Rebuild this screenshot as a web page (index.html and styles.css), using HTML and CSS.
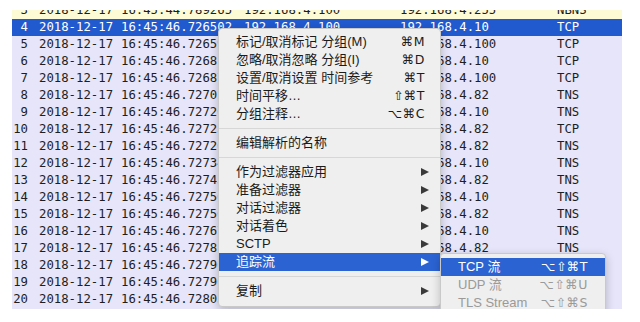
FILE: index.html
```html
<!DOCTYPE html>
<html>
<head>
<meta charset="utf-8">
<link rel="stylesheet" href="styles.css">
</head>
<body>
<div class="frame">
  <div class="packets">
    <div class="row nbns"><span class="no">3</span><span>2018-12-17</span><span>16:45:44.789265</span><span>192.168.4.100</span><span>192.168.4.255</span><span>NBNS</span></div>
    <div class="row sel"><span class="no">4</span><span>2018-12-17</span><span>16:45:46.726502</span><span>192.168.4.100</span><span>192.168.4.10</span><span>TCP</span></div>
    <div class="row"><span class="no">5</span><span>2018-12-17</span><span>16:45:46.726598</span><span>192.168.4.10</span><span>192.168.4.100</span><span>TCP</span></div>
    <div class="row"><span class="no">6</span><span>2018-12-17</span><span>16:45:46.726814</span><span>192.168.4.100</span><span>192.168.4.10</span><span>TCP</span></div>
    <div class="row"><span class="no">7</span><span>2018-12-17</span><span>16:45:46.726870</span><span>192.168.4.10</span><span>192.168.4.100</span><span>TCP</span></div>
    <div class="row"><span class="no">8</span><span>2018-12-17</span><span>16:45:46.727012</span><span>192.168.4.10</span><span>192.168.4.82</span><span>TNS</span></div>
    <div class="row"><span class="no">9</span><span>2018-12-17</span><span>16:45:46.727206</span><span>192.168.4.82</span><span>192.168.4.10</span><span>TNS</span></div>
    <div class="row"><span class="no">10</span><span>2018-12-17</span><span>16:45:46.727231</span><span>192.168.4.10</span><span>192.168.4.82</span><span>TCP</span></div>
    <div class="row"><span class="no">11</span><span>2018-12-17</span><span>16:45:46.727265</span><span>192.168.4.10</span><span>192.168.4.82</span><span>TNS</span></div>
    <div class="row"><span class="no">12</span><span>2018-12-17</span><span>16:45:46.727348</span><span>192.168.4.82</span><span>192.168.4.10</span><span>TNS</span></div>
    <div class="row"><span class="no">13</span><span>2018-12-17</span><span>16:45:46.727433</span><span>192.168.4.10</span><span>192.168.4.82</span><span>TNS</span></div>
    <div class="row"><span class="no">14</span><span>2018-12-17</span><span>16:45:46.727502</span><span>192.168.4.82</span><span>192.168.4.10</span><span>TNS</span></div>
    <div class="row"><span class="no">15</span><span>2018-12-17</span><span>16:45:46.727561</span><span>192.168.4.10</span><span>192.168.4.82</span><span>TNS</span></div>
    <div class="row"><span class="no">16</span><span>2018-12-17</span><span>16:45:46.727677</span><span>192.168.4.82</span><span>192.168.4.10</span><span>TNS</span></div>
    <div class="row"><span class="no">17</span><span>2018-12-17</span><span>16:45:46.727810</span><span>192.168.4.10</span><span>192.168.4.82</span><span>TNS</span></div>
    <div class="row"><span class="no">18</span><span>2018-12-17</span><span>16:45:46.727904</span><span>192.168.4.82</span><span>192.168.4.10</span><span>TNS</span></div>
    <div class="row"><span class="no">19</span><span>2018-12-17</span><span>16:45:46.727966</span><span>192.168.4.10</span><span>192.168.4.82</span><span>TNS</span></div>
    <div class="row"><span class="no">20</span><span>2018-12-17</span><span>16:45:46.728037</span><span>192.168.4.82</span><span>192.168.4.10</span><span>TNS</span></div>
  </div>

  <div class="menu main">
    <div class="item"><span>标记/取消标记 分组(M)</span><span class="key">⌘M</span></div>
    <div class="item"><span>忽略/取消忽略 分组(I)</span><span class="key">⌘D</span></div>
    <div class="item"><span>设置/取消设置 时间参考</span><span class="key">⌘T</span></div>
    <div class="item"><span>时间平移…</span><span class="key">⇧⌘T</span></div>
    <div class="item"><span>分组注释…</span><span class="key">⌥⌘C</span></div>
    <div class="sep"></div>
    <div class="item"><span>编辑解析的名称</span></div>
    <div class="sep"></div>
    <div class="item sub"><span>作为过滤器应用</span><span class="arrow"></span></div>
    <div class="item sub"><span>准备过滤器</span><span class="arrow"></span></div>
    <div class="item sub"><span>对话过滤器</span><span class="arrow"></span></div>
    <div class="item sub"><span>对话着色</span><span class="arrow"></span></div>
    <div class="item sub"><span>SCTP</span><span class="arrow"></span></div>
    <div class="item sub active"><span>追踪流</span><span class="arrow"></span></div>
    <div class="sep"></div>
    <div class="item sub"><span>复制</span><span class="arrow"></span></div>
  </div>

  <div class="menu submenu">
    <div class="item active"><span>TCP 流</span><span class="key">⌥⇧⌘T</span></div>
    <div class="item disabled"><span>UDP 流</span><span class="key">⌥⇧⌘U</span></div>
    <div class="item disabled"><span>TLS Stream</span><span class="key">⌥⇧⌘S</span></div>
  </div>
</div>
</body>
</html>
```

FILE: styles.css
```css
html, body {
  margin: 0;
  padding: 0;
  background: #ffffff;
}

.frame {
  position: relative;
  margin: 10px 0 0 12px;
  width: 610px;
  height: 299px;
  overflow: hidden;
  background: #e6e5f9;
}

.packets {
  margin-top: -8px;
}

.row {
  display: grid;
  grid-template-columns: 27px 82px 123px 156px 157px 1fr;
  height: 17px;
  line-height: 17px;
  font-family: "DejaVu Sans Mono", monospace;
  font-size: 12.3px;
  color: #1e1e22;
  white-space: nowrap;
  background: #e6e5f9;
}

.row .no {
  text-align: right;
  padding-right: 11px;
}

.row.nbns {
  background: #fdfbd6;
}

.row.sel {
  background: #2159cf;
  color: #ffffff;
}

.menu {
  position: absolute;
  background: #efefef;
  border: 1px solid #c9c9c9;
  border-radius: 4px;
  box-shadow: 0 3px 10px rgba(0, 0, 0, 0.22);
  font-family: "Liberation Sans", "Noto Sans CJK SC", sans-serif;
  font-size: 13px;
  color: #1b1b1b;
}

.main {
  left: 206px;
  top: 18px;
  width: 221px;
  padding: 4px 0 6px;
}

.submenu {
  left: 428px;
  top: 243px;
  width: 164px;
  padding: 4px 0;
}

.item {
  display: flex;
  justify-content: space-between;
  align-items: center;
  height: 18px;
  line-height: 18px;
  padding: 0 15px 0 17px;
  white-space: nowrap;
}

.submenu .item {
  padding: 0 17px 0 17px;
}

.item.sub {
  padding-right: 11px;
}

.item.active {
  background: #2b63d3;
  color: #ffffff;
}

.item.disabled {
  color: #9a9a9a;
}

.key {
  font-family: "DejaVu Sans", sans-serif;
  font-size: 12.5px;
  letter-spacing: 0.5px;
}

.arrow {
  width: 0;
  height: 0;
  border-top: 4.5px solid transparent;
  border-bottom: 4.5px solid transparent;
  border-left: 8px solid #3a3a3a;
}

.item.active .arrow {
  border-left-color: #ffffff;
}

.sep {
  height: 1px;
  margin: 5px 0;
  background: #d7d7d7;
}
```
